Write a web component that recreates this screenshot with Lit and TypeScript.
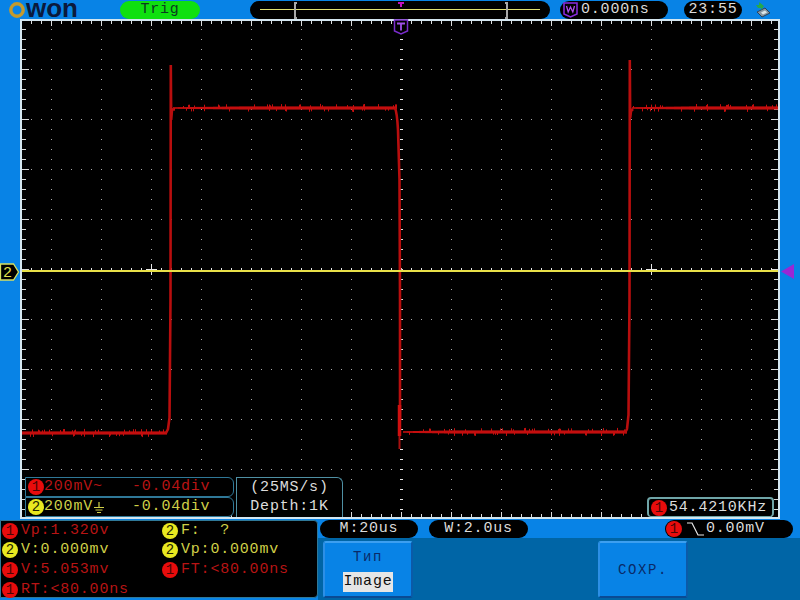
import { LitElement, html, svg, css } from 'lit';
import { customElement } from 'lit/decorators.js';

// small seeded generator so the trace noise is the same on every load
let seed = 7;
const rnd = () => {
  seed = (seed * 16807) % 2147483647;
  return seed / 2147483647;
};

function plateau(x0: number, x1: number, y: number, fadeIn: number) {
  let d = '';
  for (let x = x0; x <= x1; x++) {
    const ramp = Math.min(1, (x - x0) / fadeIn);
    const half = 0.8 + ramp * 0.8;
    const up = rnd() > 0.86 ? 1 + rnd() * 1.5 : 0;
    const down = rnd() > 0.9 ? 1 + rnd() * 1.5 : 0;
    d += `M${x + 0.5} ${(y - half - up).toFixed(1)}V${(y + half + down).toFixed(1)}`;
  }
  return d;
}

function gridPaths() {
  let dots = '';
  let ticks = '';
  let center = '';
  const dot = (x: number, y: number) => `M${x} ${y}h1v1h-1z`;
  for (let x = 51; x < 778; x += 50) {
    for (let y = 29; y < 516; y += 10) {
      if (x !== 401) dots += dot(x, y);
    }
  }
  for (let y = 69; y < 516; y += 50) {
    for (let x = 31; x < 778; x += 10) {
      if (y !== 269) dots += dot(x, y);
    }
  }
  for (let x = 31; x < 778; x += 10) {
    const len = (x - 1) % 50 === 0 ? 5 : 3;
    ticks += `M${x} 21h1v${len}h-1zM${x} ${517 - len}h1v${len}h-1z`;
    center += `M${x} 268h1v4h-1z`;
  }
  for (let y = 29; y < 516; y += 10) {
    const len = (y - 19) % 50 === 0 ? 7 : 4;
    ticks += `M22 ${y}h${len}v1h-${len}zM${778 - len} ${y}h${len}v1h-${len}z`;
    center += `M400 ${y}h3v1h-3z`;
  }
  return { dots, ticks, center };
}

const grid = gridPaths();
const traces = [
  plateau(21, 166, 433, 1),
  plateau(173, 396, 108, 70),
  plateau(403, 626, 432, 50),
  plateau(632, 777, 108, 60),
];

const badge = (n: number) => html`<span class="badge ${n === 1 ? 'b-red' : 'b-yel'}">${n}</span>`;

@customElement('app-root')
export class AppRoot extends LitElement {
  static styles = css`
    :host {
      display: flex;
      flex-direction: column;
      position: relative;
      width: 800px;
      height: 600px;
      overflow: hidden;
      background: #0883e6;
      font-family: "Liberation Mono", monospace;
      font-size: 15px;
      letter-spacing: 0.8px;
      line-height: 18px;
      color: #dcdcdc;
    }
    .top {
      display: flex;
      height: 19px;
      align-items: flex-start;
      padding: 1px 0 0 9px;
      box-sizing: border-box;
    }
    .logo {
      display: block;
      margin-right: 41px;
    }
    .logo text {
      font-family: "Liberation Sans", sans-serif;
      font-weight: bold;
      font-size: 26px;
      letter-spacing: 0;
      fill: #0b1a3c;
    }
    .pill {
      display: flex;
      align-items: center;
      height: 18px;
      border-radius: 9px;
      background: #000;
      box-sizing: border-box;
    }
    .trig {
      width: 80px;
      justify-content: center;
      background: #0fe00f;
      color: #0a3a20;
      margin-right: 50px;
    }
    .timeline {
      width: 300px;
      margin-right: 10px;
    }
    .timeline svg { display: block; }
    .delay {
      width: 108px;
      padding-left: 3px;
      gap: 3px;
      margin-right: 16px;
    }
    .clock {
      width: 58px;
      justify-content: center;
      margin-right: 13px;
    }
    .mid {
      display: flex;
      height: 500px;
      position: relative;
    }
    .screen {
      margin-left: 20px;
      width: 760px;
      height: 500px;
      border: 2px solid #d4e6f0;
      box-sizing: border-box;
      background: #000;
      position: relative;
    }
    .screen > svg {
      display: block;
    }
    .chinfo {
      position: absolute;
      left: 3px;
      bottom: 0;
      display: flex;
      gap: 2px;
    }
    .chrows {
      display: flex;
      flex-direction: column;
      width: 209px;
    }
    .chrow {
      display: flex;
      align-items: center;
      height: 20px;
      box-sizing: border-box;
      border: 1px solid #2f7898;
      border-radius: 0 6px 6px 0;
      padding-left: 2px;
      background: #000;
    }
    .chrow .volt { width: 88px; display: flex; align-items: center; }
    .red { color: #b81414; }
    .yel { color: #d0d048; }
    .rate {
      width: 107px;
      height: 40px;
      box-sizing: border-box;
      border: 1px solid #4f90a4;
      border-bottom: none;
      border-radius: 0 6px 0 0;
      background: #000;
      text-align: center;
      line-height: 19px;
    }
    .freq {
      position: absolute;
      left: 625px;
      bottom: 0;
      width: 127px;
      height: 20px;
      display: flex;
      align-items: center;
      gap: 2px;
      padding-left: 2px;
      box-sizing: border-box;
      border: 2px solid #6fa5a8;
      border-bottom-width: 1px;
      border-radius: 4px;
      background: #000;
    }
    .t-mark {
      position: absolute;
      left: 393px;
      top: 0;
    }
    .marker-l {
      position: absolute;
      left: 0;
      top: 244px;
    }
    .marker-r {
      position: absolute;
      left: 781px;
      top: 245px;
    }
    .bottom {
      display: flex;
      flex: 1;
      min-height: 0;
    }
    .meas {
      width: 318px;
      height: 78px;
      margin-top: 1px;
      box-sizing: border-box;
      border: 1px solid #2f7898;
      border-radius: 0 4px 4px 0;
      background: #000;
      padding: 0 0 0 1px;
      display: grid;
      grid-template-columns: 160px 1fr;
      grid-auto-rows: 19.6px;
    }
    .cell {
      display: flex;
      align-items: center;
      gap: 3px;
      white-space: pre;
    }
    .right {
      flex: 1;
      display: flex;
      flex-direction: column;
    }
    .status {
      display: flex;
      height: 19px;
      padding: 1px 0 0 2px;
      box-sizing: border-box;
    }
    .status .pill { justify-content: center; }
    .pm { width: 98px; margin-right: 11px; }
    .pw { width: 99px; margin-right: 137px; }
    .ptrig {
      width: 128px;
      justify-content: flex-start !important;
      padding-left: 1px;
      gap: 1px;
    }
    .keys {
      flex: 1;
      display: flex;
      gap: 185px;
      padding: 3px 0 0 5px;
      background: #0065a6;
    }
    .key {
      width: 90px;
      height: 57px;
      box-sizing: border-box;
      border: 2px solid;
      border-color: #3c9ff0 #0b5aa8 #0a4a94 #2c8fe6;
      border-radius: 3px;
      background: #0883e6;
      color: #0a2a68;
      display: flex;
      flex-direction: column;
      align-items: center;
      justify-content: center;
      font-size: 14px;
      letter-spacing: 1.6px;
    }
    .key .sel {
      margin-top: 5px;
      width: 50px;
      height: 20px;
      background: #e6e6e6;
      color: #101010;
      font-size: 15px;
      letter-spacing: 0.8px;
      line-height: 20px;
      text-align: center;
    }
    .key .title { margin-bottom: 1px; }
    .badge {
      flex: none;
      display: inline-block;
      width: 16px;
      height: 16px;
      border-radius: 50%;
      font-size: 14px;
      line-height: 16px;
      letter-spacing: 0;
      text-align: center;
    }
    .b-red { background: #e80c0c; color: #4a0505; }
    .b-yel { background: #e8e820; color: #222200; }
  `;

  render() {
    return html`
      <div class="top">
        <svg class="logo" width="70" height="18" viewBox="0 0 70 18">
          <circle cx="8" cy="9" r="6.200" fill="none" stroke="#c49a2c" stroke-width="3.400"></circle>
          <text x="17" y="16">won</text>
        </svg>
        <div class="pill trig">Trig</div>
        <div class="pill timeline">
          <svg width="300" height="18" viewBox="0 0 300 18">
            <path d="M10 8.500H290" stroke="#e0e070" stroke-width="1"></path>
            <path d="M47 2h-2v15h2M255 2h2v15h-2" fill="none" stroke="#a8a8a8" stroke-width="2"></path>
            <path d="M148 1h6v2h-2v3h-2v-3h-2z" fill="#c010c0"></path>
          </svg>
        </div>
        <div class="pill delay">
          <svg width="15" height="16" viewBox="0 0 15 16">
            <path d="M1 1h13v11l-6.500 3l-6.500-3z" fill="#000" stroke="#8a2ce0" stroke-width="1.500"></path>
            <path d="M3.500 4l1.700 6l2.300-5l2.300 5l1.700-6" fill="none" stroke="#b050f0" stroke-width="1.300"></path>
          </svg>
          0.000ns
        </div>
        <div class="pill clock">23:55</div>
        <svg width="16" height="18" viewBox="0 0 16 18">
          <path d="M2 11l8-4l5 5l-8 4z" fill="#8796a2" stroke="#2c4258" stroke-width="1"></path>
          <path d="M6 11.500l4-2l2 2l-4 2z" fill="#dce6ea"></path>
          <path d="M1 4h3v-3l5 4l-3 4v-2h-3z" fill="#26a84a"></path>
        </svg>
      </div>

      <div class="mid">
        <div class="screen">
          <svg width="756" height="496" viewBox="22 21 756 496">
            <path d=${grid.dots} fill="#a8a8a8" shape-rendering="crispEdges"></path>
            <path d=${grid.ticks} fill="#dcdcdc" shape-rendering="crispEdges"></path>
            <path d=${grid.center} fill="#e8e8e8" shape-rendering="crispEdges"></path>
            <path d="M146 269.500h11M151.500 264v11M646 269.500h11M651.500 264v11" stroke="#e8e8e8" stroke-width="1" shape-rendering="crispEdges"></path>
            ${traces.map(d => svg`<path d=${d} stroke="#c40e0e" stroke-width="1" fill="none"></path>`)}
            <path d="M166 433L168 429L169.500 418L170.500 300L170.800 65L171.200 120L172 110L174 109" fill="none" stroke="#b80e0e" stroke-width="2.600"></path>
            <path d="M395 108Q397 112 398 130L399.500 180L400 300L400 420" fill="none" stroke="#b80e0e" stroke-width="2.600"></path>
            <path d="M399.500 405V436" fill="none" stroke="#d01010" stroke-width="3.500"></path>
            <path d="M399.500 436V449" fill="none" stroke="#a81010" stroke-width="2"></path>
            <path d="M625 433L627 429L628.500 415L629.500 300L629.800 60L630.200 118L631 111L633 109" fill="none" stroke="#b80e0e" stroke-width="2.600"></path>
            <path d="M22 270h756v2h-756z" fill="#e8e048" shape-rendering="crispEdges"></path>
          </svg>
          <div class="chinfo">
            <div class="chrows">
              <div class="chrow red">${badge(1)}<span class="volt">200mV~</span>-0.04div</div>
              <div class="chrow yel">${badge(2)}<span class="volt">200mV<svg width="12" height="16" viewBox="0 0 12 16">
                <path d="M6 3V8M1 8.500H11M2.500 11H9.500M4 13.500H8" stroke="#d0d048" stroke-width="1.200" fill="none"></path>
              </svg></span>-0.04div</div>
            </div>
            <div class="rate">(25MS/s)<br />Depth:1K</div>
          </div>
          <div class="freq">${badge(1)}54.4210KHz</div>
        </div>
        <svg class="t-mark" width="16" height="16" viewBox="0 0 16 16">
          <path d="M1.500 1h13v11l-6.500 3l-6.500-3z" fill="#000" stroke="#7a2ccc" stroke-width="1.500"></path>
          <path d="M4 4.500h8M8 4.500v7" stroke="#a050e8" stroke-width="1.800" fill="none"></path>
        </svg>
        <svg class="marker-l" width="20" height="18" viewBox="0 0 20 18">
          <path d="M0.500 1h13l5 8l-5 8h-13z" fill="#000" stroke="#d6e060" stroke-width="1.300"></path>
          <text x="3" y="14" font-size="15" fill="#e4e04c" font-family="Liberation Mono">2</text>
        </svg>
        <svg class="marker-r" width="14" height="15" viewBox="0 0 14 15">
          <path d="M0 7.500L13 0V15z" fill="#9a28d4"></path>
        </svg>
      </div>

      <div class="bottom">
        <div class="meas">
          <div class="cell red">${badge(1)}Vp:1.320v</div>
          <div class="cell yel">${badge(2)}F:  ?</div>
          <div class="cell yel">${badge(2)}V:0.000mv</div>
          <div class="cell yel">${badge(2)}Vp:0.000mv</div>
          <div class="cell red">${badge(1)}V:5.053mv</div>
          <div class="cell red">${badge(1)}FT:&lt;80.00ns</div>
          <div class="cell red">${badge(1)}RT:&lt;80.00ns</div>
        </div>
        <div class="right">
          <div class="status">
            <div class="pill pm">M:20us</div>
            <div class="pill pw">W:2.0us</div>
            <div class="pill ptrig">
              ${badge(1)}
              <svg width="22" height="16" viewBox="0 0 22 16">
                <path d="M4 2H9L15 14H21" fill="none" stroke="#e8e8e8" stroke-width="1.200"></path>
              </svg>
              0.00mV
            </div>
          </div>
          <div class="keys">
            <div class="key">
              <div class="title">Тип</div>
              <div class="sel">Image</div>
            </div>
            <div class="key">СОХР.</div>
          </div>
        </div>
      </div>
    `;
  }
}
